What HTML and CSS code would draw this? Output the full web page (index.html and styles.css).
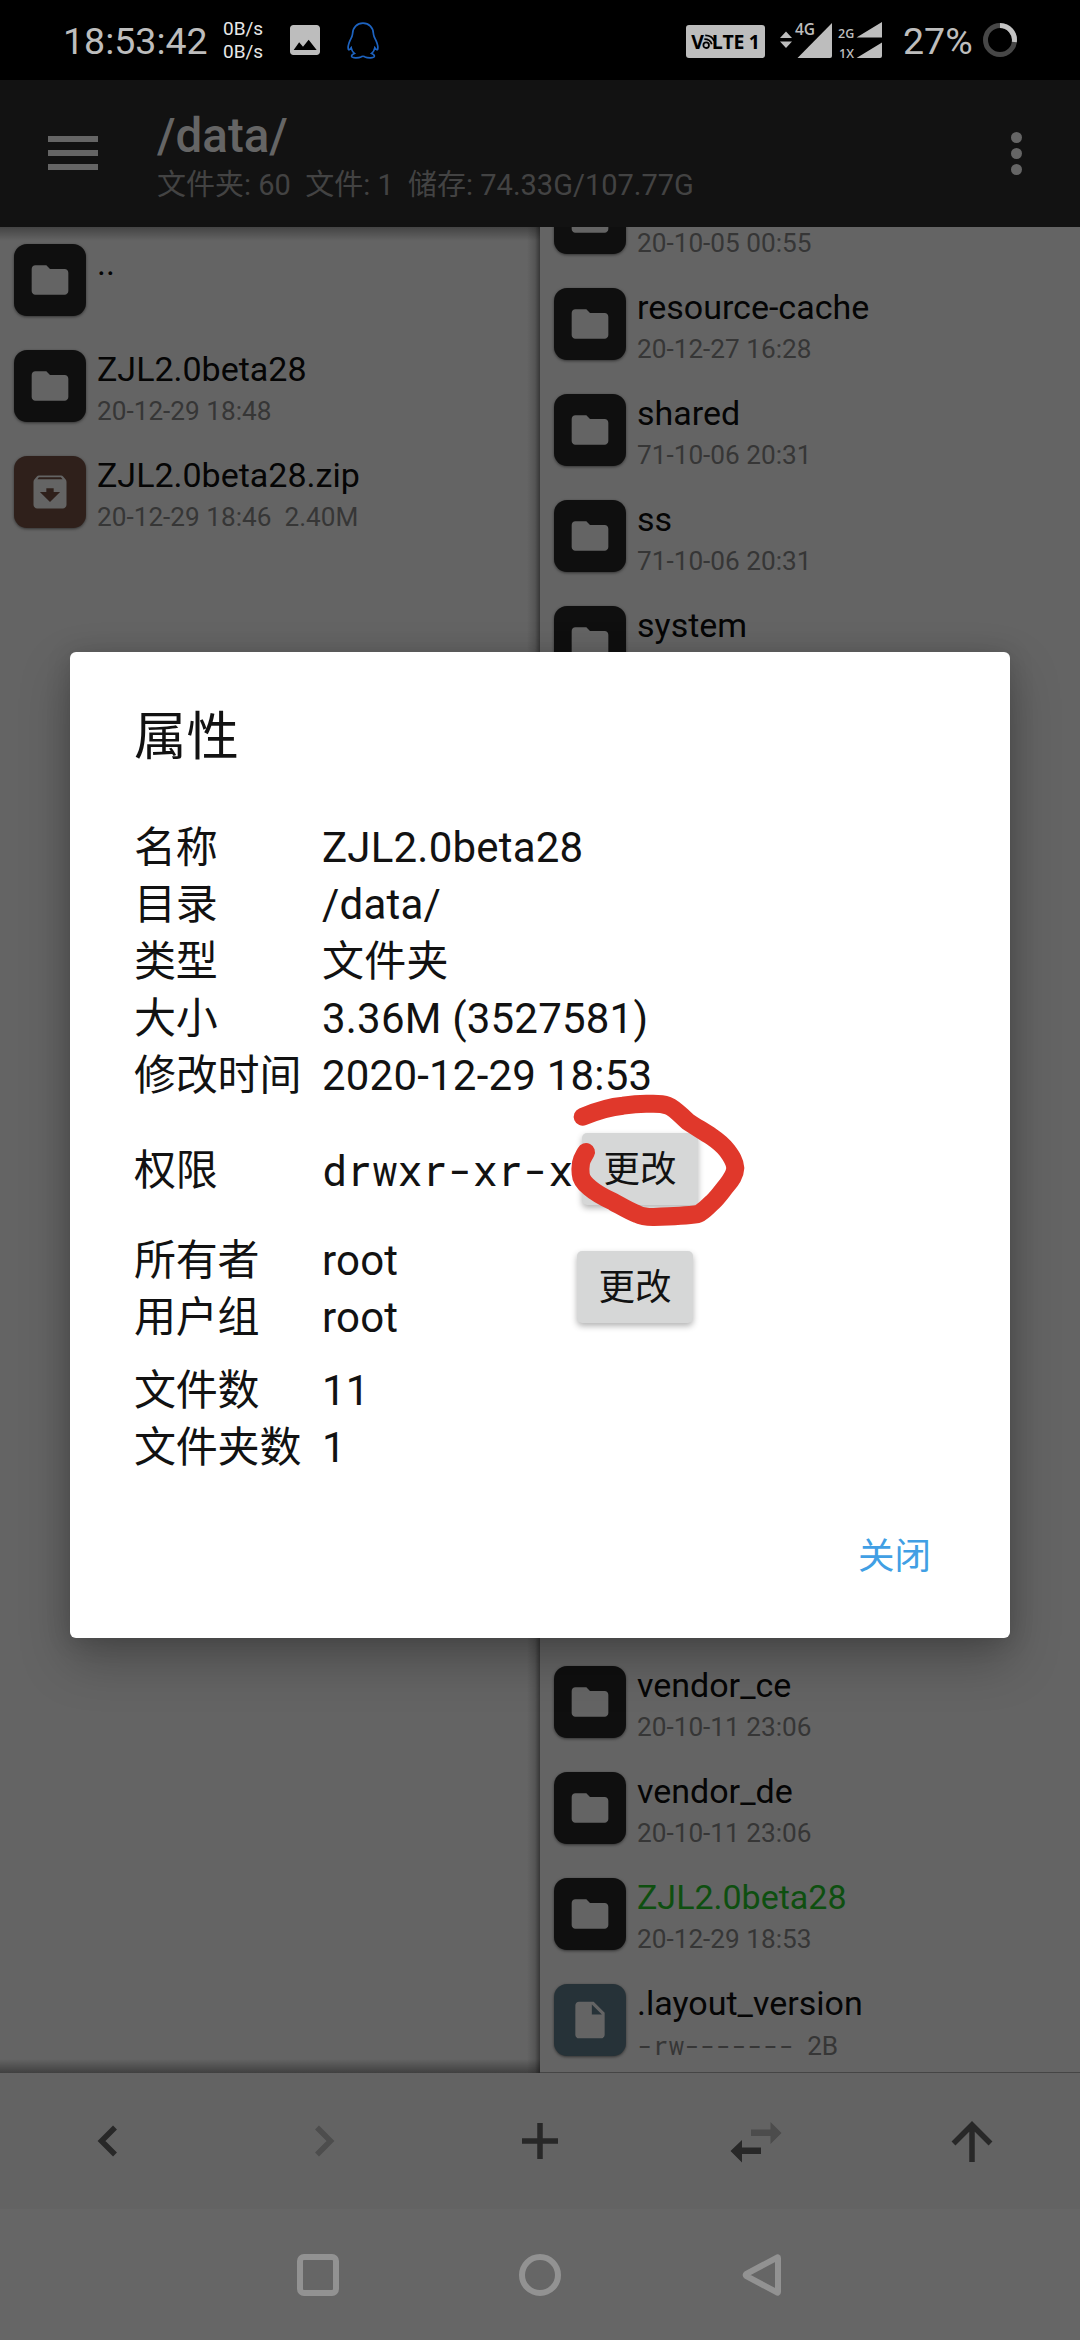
FILE: index.html
```html
<!DOCTYPE html>
<html lang="zh-CN">
<head>
<meta charset="utf-8">
<title>属性</title>
<link rel="stylesheet" href="styles.css">
</head>
<body>
<svg class="defs" width="0" height="0">
  <symbol id="folder" viewBox="0 0 24 24"><path d="M10 4H4c-1.1 0-1.99.9-1.99 2L2 18c0 1.1.9 2 2 2h16c1.1 0 2-.9 2-2V8c0-1.1-.9-2-2-2h-8l-2-2z"/></symbol>
  <symbol id="archive" viewBox="0 0 24 24"><path d="M20.54 5.23l-1.39-1.68C18.88 3.21 18.47 3 18 3H6c-.47 0-.88.21-1.16.55L3.46 5.23C3.17 5.57 3 6.02 3 6.500V19c0 1.100.9 2 2 2h14c1.100 0 2-.9 2-2V6.500c0-.48-.17-.93-.46-1.270zM12 17.500L6.500 12H10v-2h4v2h3.500L12 17.500zM5.120 5l.81-1h12l.94 1H5.120z"/></symbol>
  <symbol id="file" viewBox="0 0 24 24"><path d="M6 2c-1.1 0-1.99.9-1.99 2L4 20c0 1.100.89 2 1.990 2H18c1.100 0 2-.9 2-2V8l-6-6H6zm7 7V3.500L18.500 9H13z"/></symbol>
</svg>

<div class="screen">
  <header class="status">
    <span class="clock">18:53:42</span>
    <span class="speed"><span>0B/s</span><span>0B/s</span></span>
    <svg class="photo" viewBox="3 3 18 18"><path d="M21 19V5c0-1.100-.9-2-2-2H5c-1.100 0-2 .9-2 2v14c0 1.100.9 2 2 2h14c1.100 0 2-.9 2-2zM5.200 18l3.300-4.600 2.300 2.700 3.400-4.300L19 18z"/></svg>
    <svg class="penguin" viewBox="0 0 32 37"><path d="M16 1.200C10 1.200 5.800 5.500 5.600 11.500c-.1 1.500-.5 2.500-.9 3.700C3 18.500 1 22 1.100 26c0 2.300 1.200 2.500 3.100-.2.4 2.300 1.600 4.300 3.200 5.700-2 .7-3 1.800-2.700 3 .6 1.700 6.800 1.600 9.300.4.900-.9 3.100-.9 4 0 2.500 1.200 8.700 1.300 9.300-.4.300-1.200-.7-2.300-2.700-3 1.600-1.400 2.800-3.400 3.200-5.700 1.900 2.700 3.100 2.500 3.100.2.100-4-1.900-7.500-3.600-10.800-.4-1.200-.8-2.200-.9-3.700C26.200 5.500 22 1.200 16 1.200z"/></svg>
    <span class="volte"><b>V</b><svg viewBox="0 0 14 22"><circle cx="4.500" cy="15" r="3"/><path d="M2.500 8.500c4 0 7 2 8 5.500M3.500 4.500c4.500 0 8 2 9.500 6" /></svg><b>LTE 1</b></span>
    <svg class="cell" viewBox="0 0 106 40">
      <path d="M1 16 7 9.500 13 16zM1 19.500 7 26 13 19.500z"/>
      <path d="M18.500 36 53 1v33q0 2-2 2z"/>
      <path d="M77.500 15.500 103 0v15.500zM77.500 36 103 20.500V34q0 2-2 2z"/>
      <text x="16" y="13" class="big">4G</text>
      <text x="59" y="15.500">2G</text>
      <text x="60" y="36">1X</text>
    </svg>
    <span class="percent">27%</span>
    <svg class="ring" viewBox="0 0 34 34"><circle cx="17" cy="17" r="14.500" stroke="#474747"/><path d="M17 2.500A14.500 14.500 0 0 1 31.300 19" stroke="#c4c4c4"/></svg>
  </header>

  <div class="toolbar">
    <div class="burger"><i></i><i></i><i></i></div>
    <div class="heading">
      <div class="path">/data/</div>
      <div class="stats">文件夹: 60&nbsp; 文件: 1&nbsp; 储存: 74.33G/107.77G</div>
    </div>
    <div class="more"><i></i><i></i><i></i></div>
  </div>

  <main class="panels">
    <section class="panel left">
      <div class="rows">
        <div class="row"><span class="tile"><svg><use href="#folder"/></svg></span><div><div class="name">..</div></div></div>
        <div class="row"><span class="tile"><svg><use href="#folder"/></svg></span><div><div class="name">ZJL2.0beta28</div><div class="date">20-12-29 18:48</div></div></div>
        <div class="row"><span class="tile zip"><svg><use href="#archive"/></svg></span><div><div class="name">ZJL2.0beta28.zip</div><div class="date">20-12-29 18:46&nbsp; 2.40M</div></div></div>
      </div>
    </section>
    <section class="panel right">
      <div class="rows scrolled">
        <div class="row"><span class="tile"><svg><use href="#folder"/></svg></span><div><div class="name"></div><div class="date">20-10-05 00:55</div></div></div>
        <div class="row"><span class="tile"><svg><use href="#folder"/></svg></span><div><div class="name">resource-cache</div><div class="date">20-12-27 16:28</div></div></div>
        <div class="row"><span class="tile"><svg><use href="#folder"/></svg></span><div><div class="name">shared</div><div class="date">71-10-06 20:31</div></div></div>
        <div class="row"><span class="tile"><svg><use href="#folder"/></svg></span><div><div class="name">ss</div><div class="date">71-10-06 20:31</div></div></div>
        <div class="row"><span class="tile"><svg><use href="#folder"/></svg></span><div><div class="name">system</div></div></div>
      </div>
      <div class="rows">
        <div class="row"><span class="tile"><svg><use href="#folder"/></svg></span><div><div class="name">vendor_ce</div><div class="date">20-10-11 23:06</div></div></div>
        <div class="row"><span class="tile"><svg><use href="#folder"/></svg></span><div><div class="name">vendor_de</div><div class="date">20-10-11 23:06</div></div></div>
        <div class="row"><span class="tile"><svg><use href="#folder"/></svg></span><div><div class="name fresh">ZJL2.0beta28</div><div class="date">20-12-29 18:53</div></div></div>
        <div class="row"><span class="tile doc"><svg><use href="#file"/></svg></span><div><div class="name">.layout_version</div><div class="date"><span class="mono">-rw-------</span>&nbsp; 2B</div></div></div>
      </div>
    </section>
  </main>

  <nav class="actions">
    <svg viewBox="0 0 60 60"><path d="M37 16.500 23.500 30 37 43.500"/></svg>
    <svg class="off" viewBox="0 0 60 60"><path d="M23 16.500 36.500 30 23 43.500"/></svg>
    <svg viewBox="0 0 60 60"><path d="M30 12v36M12 30h36"/></svg>
    <svg class="solid" viewBox="0 0 60 60"><path class="dim" d="M25 18.500H44.500V11L55.500 22 44.500 33V25H25z"/><path d="M35 36.500H16V29L4.500 40 16 51.500V43H35z"/></svg>
    <svg viewBox="0 0 60 60"><path d="M30 51V14M11.500 32.500 30 14 48.500 32.500"/></svg>
  </nav>

  <footer class="system">
    <svg viewBox="0 0 44 44"><rect x="4" y="4" width="36" height="36" rx="4"/></svg>
    <svg viewBox="0 0 44 44"><circle cx="22" cy="22" r="18"/></svg>
    <svg viewBox="0 0 44 44"><path d="M38 5v34q0 1-1 .4L6.500 23.200q-1.800-1.200 0-2.400L37 4.600q1-.6 1 .4z"/></svg>
  </footer>

  <div class="scrim">
    <div class="dialog">
      <h1>属性</h1>
      <dl class="props">
        <dt>名称</dt><dd>ZJL2.0beta28</dd>
        <dt>目录</dt><dd>/data/</dd>
        <dt>类型</dt><dd>文件夹</dd>
        <dt>大小</dt><dd>3.36M (3527581)</dd>
        <dt>修改时间</dt><dd>2020-12-29 18:53</dd>
      </dl>
      <div class="perm">
        <span class="label">权限</span><span class="mode mono">drwxr-xr-x</span><button>更改</button>
      </div>
      <div class="owner">
        <dl class="props">
          <dt>所有者</dt><dd>root</dd>
          <dt>用户组</dt><dd>root</dd>
        </dl>
        <button>更改</button>
      </div>
      <dl class="props counts">
        <dt>文件数</dt><dd>11</dd>
        <dt>文件夹数</dt><dd>1</dd>
      </dl>
      <a class="close">关闭</a>
      <svg class="mark" viewBox="570 1090 180 140"><path d="M582.700 1116.700C594 1112 608 1107 623 1105.700C634 1104 642 1103.500 650 1103.800C658 1103.500 663 1104 668 1105.700C676 1109 681 1116 688 1121.700C696 1127 703 1131 711.700 1136.700C718 1141 722 1144 726.700 1150C731 1156 735 1161 735.300 1168C735 1175 731 1180 727 1185C722 1191 718 1197 713 1201.700C708 1206 704 1211 698 1214C684 1216 668 1216.500 653 1217C647 1217 642 1216.500 637 1214C629 1211 621 1206 613 1201.700C605 1198 597 1194 590 1188C585 1184 581 1180 580.700 1174C580 1169 580.500 1166 581 1163C582 1158 584 1156 586 1152"/></svg>
    </div>
  </div>
</div>
</body>
</html>
```

FILE: styles.css
```css
* { box-sizing: border-box; }

body {
  margin: 0;
  font-family: Roboto, "Noto Sans CJK SC", sans-serif;
  background: #646464;
}

.defs { position: absolute; }
svg { display: block; }

.screen {
  position: relative;
  width: 1080px;
  height: 2340px;
  overflow: hidden;
  display: flex;
  flex-direction: column;
}

/* status bar */
.status {
  height: 80px;
  background: #000;
  color: #bdbdbd;
  display: flex;
  align-items: center;
  padding: 0 63px;
  flex: none;
}
.clock, .percent { font-size: 37.500px; line-height: 40px; padding-top: 1px; }
.clock { width: 160px; }
.speed {
  display: flex;
  flex-direction: column;
  width: 67px;
  padding-top: 1px;
  font-size: 19px;
  line-height: 22.500px;
  color: #e8e8e8;
}
.photo { width: 30px; height: 30px; fill: #bdbdbd; }
.penguin {
  width: 32px;
  height: 37px;
  margin-left: 27px;
  fill: none;
  stroke: #1d63c0;
  stroke-width: 1.700;
}
.volte {
  width: 79px;
  height: 33px;
  margin: 3px 14px 0 auto;
  border-radius: 3px;
  background: #bdbdbd;
  color: #000;
  display: flex;
  align-items: center;
  justify-content: center;
  font-family: "Open Sans", sans-serif;
  font-size: 19.500px;
}
.volte b { letter-spacing: -0.300px; }
.volte svg {
  width: 13px;
  height: 21px;
  margin: 0 -3px 0 -2px;
  fill: none;
  stroke: #000;
  stroke-width: 1.900;
}
.cell { width: 106px; height: 40px; margin-top: 4px; fill: #bdbdbd; overflow: visible; }
.cell text { font-family: "Open Sans", sans-serif; font-size: 12.500px; font-weight: 600; }
.cell .big { font-size: 15.500px; }
.percent { margin-left: 18px; width: 80px; }
.ring { width: 34px; height: 34px; fill: none; stroke-width: 5; }

/* app bar */
.toolbar {
  height: 147px;
  flex: none;
  background: #121212;
  display: flex;
  align-items: center;
  padding: 0 58px 0 48px;
}
.burger { width: 109px; display: flex; flex-direction: column; gap: 8px; margin-top: -1px; }
.burger i { width: 50px; height: 6px; background: #656565; }
.heading { flex: 1; padding-top: 7px; }
.path { font-size: 47.500px; font-weight: 500; line-height: 56px; color: #656565; }
.stats { font-size: 29px; line-height: 42px; color: #434343; white-space: nowrap; }
.more { display: flex; flex-direction: column; gap: 5px; margin-top: -1px; }
.more i { width: 11px; height: 11px; border-radius: 50%; background: #656565; }

/* file panels */
.panels { height: 1846px; flex: none; display: grid; grid-template-columns: 540px 540px; }
.panel { overflow: hidden; background: #646464; }
.left {
  background:
    linear-gradient(to left, rgba(0,0,0,.45), rgba(0,0,0,.15) 5px, transparent 13px),
    linear-gradient(rgba(0,0,0,.32), transparent 14px),
    linear-gradient(to top, rgba(0,0,0,.36), transparent 14px),
    #646464;
}
.right {
  display: flex;
  flex-direction: column;
  justify-content: space-between;
  box-shadow: inset 0 -1px #454545;
}
.scrolled { margin-top: -62px; }
.row { height: 106px; display: flex; padding: 17px 14px 0; gap: 11px; }
.tile {
  width: 72px;
  height: 72px;
  flex: none;
  border-radius: 13px;
  background: #0f0f0f;
  box-shadow: 0 1px 3px rgba(0,0,0,.5);
  display: flex;
  align-items: center;
  justify-content: center;
}
.tile svg { width: 44px; height: 44px; fill: #646464; }
.zip { background: #2f201b; }
.doc { background: #263238; }
.name { height: 39px; font-size: 34px; line-height: 38px; color: #050505; white-space: nowrap; }
.fresh { color: #0e4f10; }
.date { margin-top: 5px; font-size: 26.200px; line-height: 34px; color: #363636; white-space: nowrap; }
.mono { font-family: "Droid Sans Mono", "Roboto Mono", "DejaVu Sans Mono", monospace; }

/* bottom bars */
.actions {
  height: 136px;
  flex: none;
  background: #636363;
  display: grid;
  grid-template-columns: repeat(5, 1fr);
  align-items: center;
  justify-items: center;
}
.actions svg { width: 60px; height: 60px; fill: none; stroke: #282828; stroke-width: 5.500; }
.actions .off { stroke: #4d4d4d; }
.actions .solid { fill: #282828; stroke: none; }
.actions .dim { fill: #4c4c4c; }
.system {
  flex: 1;
  background: #666;
  display: flex;
  align-items: center;
  justify-content: center;
  gap: 178px;
}
.system svg { width: 44px; height: 44px; fill: none; stroke: #929292; stroke-width: 6; }

/* properties dialog */
.scrim { position: absolute; inset: 0; padding: 652px 70px 0; }
.dialog {
  position: relative;
  height: 986px;
  padding: 55px 79px 0 64px;
  border-radius: 6px;
  background: #fff;
  box-shadow: 0 22px 50px rgba(0,0,0,.26), 0 2px 24px rgba(0,0,0,.15);
  color: #121212;
  font-size: 42px;
  line-height: 57px;
}
h1 { margin: 0 0 52px; font-size: 52.500px; font-weight: 400; line-height: 60px; }
.props { margin: 0; display: grid; grid-template-columns: 188px auto; }
.props dt { letter-spacing: -0.200px; }
.props dd { margin: 0; letter-spacing: 0.200px; }
.perm { margin-top: 29px; height: 72px; display: flex; align-items: center; }
.label { width: 188px; padding-top: 2px; letter-spacing: -0.200px; }
.mode { width: 260px; letter-spacing: -0.100px; }
.owner { margin-top: 27px; height: 114px; display: flex; }
.owner .props { width: 443px; }
.owner button { margin-top: 19px; }
.counts { margin-top: 16px; }
button {
  width: 116px;
  height: 72px;
  padding: 0;
  border: 0;
  border-radius: 5px;
  background: #d6d7d7;
  box-shadow: 0 3px 6px rgba(0,0,0,.3);
  font: inherit;
  font-size: 36.500px;
  color: #121212;
}
.close {
  display: block;
  margin-top: 57px;
  text-align: right;
  font-size: 36.500px;
  line-height: 48px;
  color: #419fe4;
}
/* hand-drawn ring around the permissions button */
.mark {
  position: absolute;
  left: 500px;
  top: 438px;
  width: 180px;
  height: 140px;
  fill: none;
  stroke: #e0382b;
  stroke-width: 18;
  stroke-linecap: round;
  stroke-linejoin: round;
}
```
